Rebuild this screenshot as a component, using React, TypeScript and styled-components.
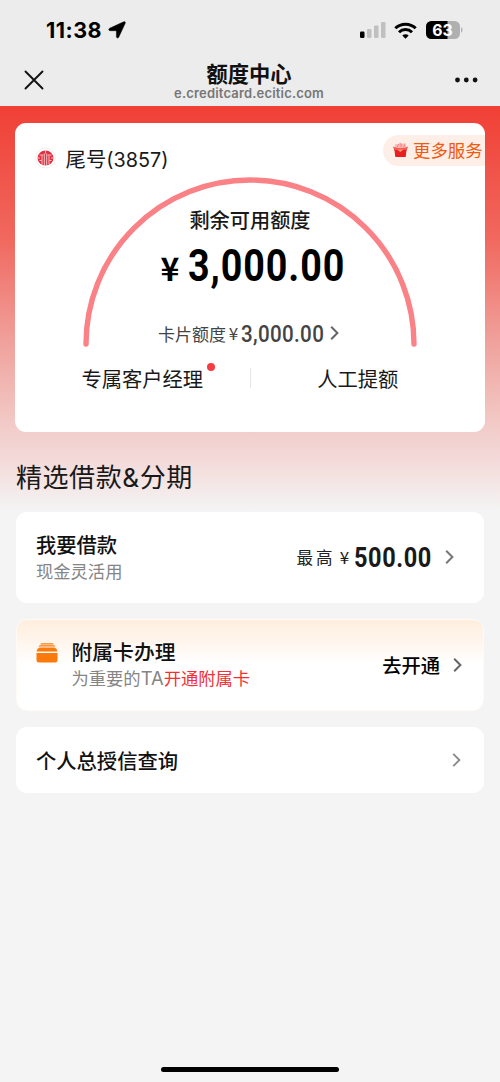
import React from "react";
import styled, { createGlobalStyle } from "styled-components";

const GlobalStyle = createGlobalStyle`
  * { box-sizing: border-box; }
  body {
    margin: 0;
    background: #f4f4f4;
    color: #191919;
    font-family: "Noto Sans CJK SC", "Noto Sans", sans-serif;
  }
`;

const Screen = styled.div`
  width: 500px;
  height: 1082px;
  display: flex;
  flex-direction: column;
  overflow: hidden;
`;

const Header = styled.header`
  height: 106px;
  flex: none;
  background: #ececec;
`;

const StatusBar = styled.div`
  height: 60px;
  padding: 0 37.5px 0 46px;
  display: flex;
  justify-content: space-between;
  align-items: center;
`;

const StatusGroup = styled.div<{ $gap: number }>`
  display: flex;
  align-items: center;
  gap: ${(p) => p.$gap}px;
`;

const Clock = styled.span`
  width: 57px;
  font: 700 21.5px/24px Inter, sans-serif;
  letter-spacing: 0.5px;
  color: #000;
`;

const NavBar = styled.div`
  height: 46px;
  padding: 0 22px 0 24px;
  display: grid;
  grid-template-columns: 60px 1fr 60px;
`;

const NavTitle = styled.div`
  text-align: center;
  margin-right: 4px;
`;

const PageTitle = styled.h1`
  margin: 0;
  font-size: 21.3px;
  line-height: 25px;
  font-weight: 700;
  color: #111;
`;

const PageUrl = styled.div`
  font: 600 13px/16px Inter, sans-serif;
  letter-spacing: 0.18px;
  color: #777;
  white-space: nowrap;
`;

const NavButton = styled.button<{ $end?: boolean }>`
  border: 0;
  padding: 0;
  background: none;
  display: flex;
  height: 40.5px;
  align-items: center;
  justify-content: ${(p) => (p.$end ? "flex-end" : "flex-start")};
`;

const Content = styled.main`
  flex: 1;
  padding: 16.5px 15px 0;
  background: linear-gradient(
      #f14035 0,
      #f04a40 35px,
      #f0695f 134px,
      #f0a09b 234px,
      #f2cdca 324px,
      #f3d8d7 350px,
      #f4f4f4 406px
    )
    #f4f4f4;
`;

const QuotaCard = styled.section`
  height: 309px;
  border-radius: 11px;
  background: #fff;
  overflow: hidden;
`;

const QuotaHeader = styled.div`
  height: 54.5px;
  display: flex;
  justify-content: space-between;
  align-items: flex-start;
  padding: 12px 0 0 20px;
`;

const CardName = styled.div`
  display: flex;
  align-items: center;
  gap: 9.5px;
  margin-top: 8px;
  font-size: 20.4px;
  line-height: 30px;
`;

const CardTail = styled.span`
  height: 30px;
  white-space: nowrap;
`;

const Latin = styled.span<{ $size: number }>`
  font-family: Inter, sans-serif;
  font-size: ${(p) => p.$size}px;
  line-height: 1;
`;

const ServicePill = styled.div`
  height: 31px;
  width: 102px;
  padding-left: 9px;
  display: flex;
  align-items: center;
  gap: 4px;
  border-radius: 16px 0 0 16px;
  background: #feeee8;
  color: #ee5a10;
  font-size: 17.4px;
  line-height: 30px;
  white-space: nowrap;
`;

const Gauge = styled.div`
  height: 170px;
  display: grid;
  justify-items: center;
  & > * {
    grid-area: 1 / 1;
  }
`;

const GaugeText = styled.div`
  display: flex;
  flex-direction: column;
  align-items: center;
  padding-top: 27.5px;
`;

const GaugeLabel = styled.div`
  font-size: 20.2px;
  line-height: 30px;
  font-weight: 500;
`;

const AmountRow = styled.div`
  display: flex;
  align-items: center;
  height: 60.5px;
  width: 178px;
  gap: 9px;
  color: #000;
`;

const LimitRow = styled.div`
  display: flex;
  align-items: center;
  height: 30px;
  width: 184px;
  margin-top: 23px;
  color: #444;
  font-size: 17px;
  white-space: nowrap;
`;

const Yen = styled.span<{ $size: number; $width: number; $bold?: boolean }>`
  flex: none;
  width: ${(p) => p.$width}px;
  font-size: ${(p) => p.$size}px;
  line-height: 1;
  font-weight: ${(p) => (p.$bold ? 700 : 400)};
  margin-top: ${(p) => (p.$bold ? 4 : -2)}px;
  display: inline-flex;
  justify-content: center;
`;

const Digits = styled.span<{
  $size: number;
  $width: number;
  $scale: number;
  $weight: number;
  $spacing: number;
}>`
  flex: none;
  width: ${(p) => p.$width}px;
  margin-top: 2px;
  font: ${(p) => p.$weight} ${(p) => p.$size}px/1 Roboto, sans-serif;
  letter-spacing: ${(p) => p.$spacing}px;
  white-space: nowrap;
  transform: scaleX(${(p) => p.$scale});
  transform-origin: left center;
`;

const Actions = styled.div`
  display: grid;
  grid-template-columns: 1fr 1px 1fr;
  align-items: center;
  justify-items: center;
  height: 62px;
  font-size: 20.3px;
  line-height: 30px;
`;

const Action = styled.div<{ $shift: number }>`
  position: relative;
  margin-left: ${(p) => p.$shift}px;
`;

const RedDot = styled.i`
  position: absolute;
  right: -12px;
  top: 0;
  width: 8px;
  height: 8px;
  border-radius: 50%;
  background: #f43c42;
`;

const Divider = styled.i`
  width: 1px;
  height: 20px;
  background: #e6e6e6;
`;

const SectionTitle = styled.h2`
  height: 40px;
  margin: 24.5px 0 15.5px 1px;
  font-size: 26px;
  line-height: 40px;
  font-weight: 400;
  letter-spacing: 0.55px;
`;

const Row = styled.section<{ $height: number; $right: number; $warm?: boolean }>`
  height: ${(p) => p.$height}px;
  margin: 0 1px 16px;
  padding: 0 ${(p) => p.$right}px 0 20px;
  display: flex;
  align-items: center;
  border-radius: 11px;
  background: ${(p) =>
    p.$warm ? "linear-gradient(#ffeede 0, #fff6ef 24px, #fff 44px)" : "#fff"};
  ${(p) => p.$warm && "border: 1px solid #fffaf5; padding-left: 19px;"}
`;

const RowText = styled.div`
  flex: 1;
  white-space: nowrap;
`;

const RowTitle = styled.div<{ $size?: number }>`
  font-size: ${(p) => p.$size ?? 20.3}px;
  line-height: 27px;
  font-weight: 500;
  color: #111;
`;

const RowNote = styled.div`
  height: 26px;
  font-size: 17.3px;
  line-height: 26px;
  color: #858585;
`;

const Highlight = styled.span`
  color: #f52f35;
`;

const MaxLabel = styled.span`
  font-size: 16.5px;
  letter-spacing: 3px;
  color: #222;
`;

const OpenLabel = styled.span`
  font-size: 19.3px;
  font-weight: 500;
  color: #000;
  margin-right: 13px;
`;

const IconSlot = styled.span`
  align-self: flex-start;
  display: flex;
  margin: 23px 13.5px 0 0;
`;

const HomeIndicator = styled.div`
  position: fixed;
  left: 161px;
  bottom: 10px;
  width: 178px;
  height: 5.5px;
  border-radius: 3px;
  background: #000;
`;

const ChevronSvg = styled.svg`
  flex: none;
`;

function Chevron({ color = "#777", width = 2 }: { color?: string; width?: number }) {
  return (
    <ChevronSvg width="9" height="16" viewBox="0 0 9 16" fill="none">
      <path d="M1.200 1.800 7.400 8l-6.200 6.200" stroke={color} strokeWidth={width} />
    </ChevronSvg>
  );
}

function LocationIcon() {
  return (
    <svg width="18" height="18" viewBox="0 0 18 18">
      <path
        d="M15.700.8c1.300-.5 2 .2 1.500 1.500l-6.400 13.800c-.6 1.400-2.400 1.100-2.400-.5V10.500c0-.6-.2-.8-.8-.8H2.200C.5 9.700.2 7.900 1.700 7.200Z"
        fill="#000"
        stroke="#000"
        strokeWidth=".5"
      />
    </svg>
  );
}

function SignalIcon() {
  return (
    <svg width="26" height="16" viewBox="0 0 26 16">
      <rect x="0" y="9.500" width="4.500" height="6.500" rx="1.200" fill="#000" />
      <rect x="7" y="7" width="4.500" height="9" rx="1.200" fill="#c0c0c0" />
      <rect x="14" y="3.500" width="4.500" height="12.500" rx="1.200" fill="#c0c0c0" />
      <rect x="21" y="0" width="4.500" height="16" rx="1.200" fill="#c0c0c0" />
    </svg>
  );
}

function WifiIcon() {
  return (
    <svg width="23" height="17" viewBox="0 0 23 17" fill="none" stroke="#000" strokeWidth="3">
      <path d="M1.300 6.300a14.600 14.600 0 0 1 20.400 0" />
      <path d="M5 10.200a9.300 9.300 0 0 1 13 0" />
      <path d="M8.300 13.500a4.600 4.600 0 0 1 6.400 0L11.500 16.700Z" fill="#000" stroke="none" />
    </svg>
  );
}

function BatteryIcon() {
  return (
    <svg width="37" height="18" viewBox="0 0 37 18">
      <defs>
        <clipPath id="charge">
          <rect width="21.500" height="18" />
        </clipPath>
      </defs>
      <rect width="34" height="18" rx="5.500" fill="#b0b0b0" />
      <rect width="34" height="18" rx="5.500" fill="#000" clipPath="url(#charge)" />
      <path d="M35 6.300c2 .7 2 4.700 0 5.400Z" fill="#b0b0b0" />
      <text
        x="16.500"
        y="14.600"
        textAnchor="middle"
        fontFamily="Inter, sans-serif"
        fontWeight="700"
        fontSize="15.800"
        fill="#fff"
      >
        63
      </text>
    </svg>
  );
}

function BankLogo() {
  return (
    <svg width="21" height="22" viewBox="0 0 21 22">
      <circle cx="10.500" cy="11" r="10" fill="#fff" stroke="#f1e9e9" strokeWidth=".8" />
      <ellipse cx="10.500" cy="11" rx="8" ry="7.500" fill="#df2f40" />
      <g stroke="#fff" strokeWidth=".7" fill="none">
        <path d="M9.300 6.500v12M11.700 6.500v12M7 8.500v9M14 8.500v9" />
        <path d="M4.500 8h4M12.500 8h4M2.500 11h2.500M16 11h2.500M4.500 13.500h2M14.500 13.500h2M10.500 3.500v3" />
      </g>
    </svg>
  );
}

function GiftIcon() {
  return (
    <svg width="17" height="18" viewBox="0 0 17 18">
      <path d="M2.500 7 3.500 3 6 3.500 8 1.500l2.500 1.500 3-1 .5 5Z" fill="#f9b4ae" />
      <path d="M5 6.500 6.500 3M9 6V2.500M11.500 6.500 13 3.500" stroke="#ec7a88" strokeWidth=".8" />
      <path d="m1 5.500 4 1.500h7l4-1.500-1.500 4.500h-12Z" fill="#f4584e" />
      <path d="M2.500 9h12l-.8 7H3.300Z" fill="#e81e22" />
      <path d="M5 8.500h6.500L8.300 11Z" fill="#ff9a6c" />
    </svg>
  );
}

function WalletIcon() {
  return (
    <svg width="22" height="20" viewBox="0 0 22 20" fill="#fb7a0c">
      <path d="M5.500.3h11q1 0 1 1.100h-13q0-1.100 1-1.100Z" />
      <path d="M4 2.300h14q1.300.2 1.500 1.200H2.500Q2.700 2.500 4 2.300Z" />
      <path d="M3.500 4.500h15q2.600.8 3 4H.5Q.9 5.300 3.500 4.500Z" />
      <path d="M.5 10h21v7q0 2.500-2.500 2.500H3Q.5 19.500.5 17Z" />
    </svg>
  );
}

export default function App() {
  return (
    <Screen>
      <GlobalStyle />
      <Header>
        <StatusBar>
          <StatusGroup $gap={5}>
            <Clock>11:38</Clock>
            <LocationIcon />
          </StatusGroup>
          <StatusGroup $gap={8.5}>
            <SignalIcon />
            <WifiIcon />
            <BatteryIcon />
          </StatusGroup>
        </StatusBar>
        <NavBar>
          <NavButton aria-label="关闭">
            <svg width="20" height="20" viewBox="0 0 20 20">
              <path d="m1.500 1.500 17 17m0-17-17 17" stroke="#111" strokeWidth="1.900" strokeLinecap="round" />
            </svg>
          </NavButton>
          <NavTitle>
            <PageTitle>额度中心</PageTitle>
            <PageUrl>e.creditcard.ecitic.com</PageUrl>
          </NavTitle>
          <NavButton $end aria-label="更多">
            <svg width="23" height="6" viewBox="0 0 23 6" fill="#111">
              <circle cx="2.500" cy="3" r="2.400" />
              <circle cx="11.300" cy="3" r="2.400" />
              <circle cx="20.100" cy="3" r="2.400" />
            </svg>
          </NavButton>
        </NavBar>
      </Header>

      <Content>
        <QuotaCard>
          <QuotaHeader>
            <CardName>
              <BankLogo />
              <CardTail>
                尾号<Latin $size={19.8}>(3857)</Latin>
              </CardTail>
            </CardName>
            <ServicePill>
              <GiftIcon />
              更多服务
            </ServicePill>
          </QuotaHeader>
          <Gauge>
            <svg width="334" height="170" viewBox="0 0 334 170" fill="none">
              <path d="M3 167a164 164 0 0 1 328 0" stroke="#fa8287" strokeWidth="5.400" strokeLinecap="round" />
            </svg>
            <GaugeText>
              <GaugeLabel>剩余可用额度</GaugeLabel>
              <AmountRow>
                <Yen $size={32} $width={18} $bold>¥</Yen>
                <Digits $size={44} $width={151} $scale={0.855} $weight={700} $spacing={1.1}>3,000.00</Digits>
              </AmountRow>
              <LimitRow>
                卡片额度
                <Yen $size={17} $width={15}>¥</Yen>
                <Digits $size={24.5} $width={89} $scale={0.84} $weight={500} $spacing={0.4}>3,000.00</Digits>
                <Chevron color="#666" />
              </LimitRow>
            </GaugeText>
          </Gauge>
          <Actions>
            <Action $shift={20}>
              专属客户经理
              <RedDot />
            </Action>
            <Divider />
            <Action $shift={-20}>人工提额</Action>
          </Actions>
        </QuotaCard>

        <SectionTitle>
          精选借款<Latin $size={26.2}>&amp;</Latin>分期
        </SectionTitle>

        <Row $height={91} $right={30}>
          <RowText>
            <RowTitle>我要借款</RowTitle>
            <RowNote>现金灵活用</RowNote>
          </RowText>
          <MaxLabel>最高</MaxLabel>
          <Yen $size={17} $width={18}>¥</Yen>
          <Digits $size={28} $width={91.5} $scale={0.84} $weight={700} $spacing={0.7}>500.00</Digits>
          <Chevron />
        </Row>

        <Row $height={92.5} $right={21} $warm>
          <IconSlot>
            <WalletIcon />
          </IconSlot>
          <RowText>
            <RowTitle $size={20.8}>附属卡办理</RowTitle>
            <RowNote>
              为重要的<Latin $size={18.4}>TA</Latin>
              <Highlight>开通附属卡</Highlight>
            </RowNote>
          </RowText>
          <OpenLabel>去开通</OpenLabel>
          <Chevron color="#666" />
        </Row>

        <Row $height={66} $right={23}>
          <RowText>
            <RowTitle>个人总授信查询</RowTitle>
          </RowText>
          <Chevron color="#888" width={1.8} />
        </Row>
      </Content>
      <HomeIndicator />
    </Screen>
  );
}
